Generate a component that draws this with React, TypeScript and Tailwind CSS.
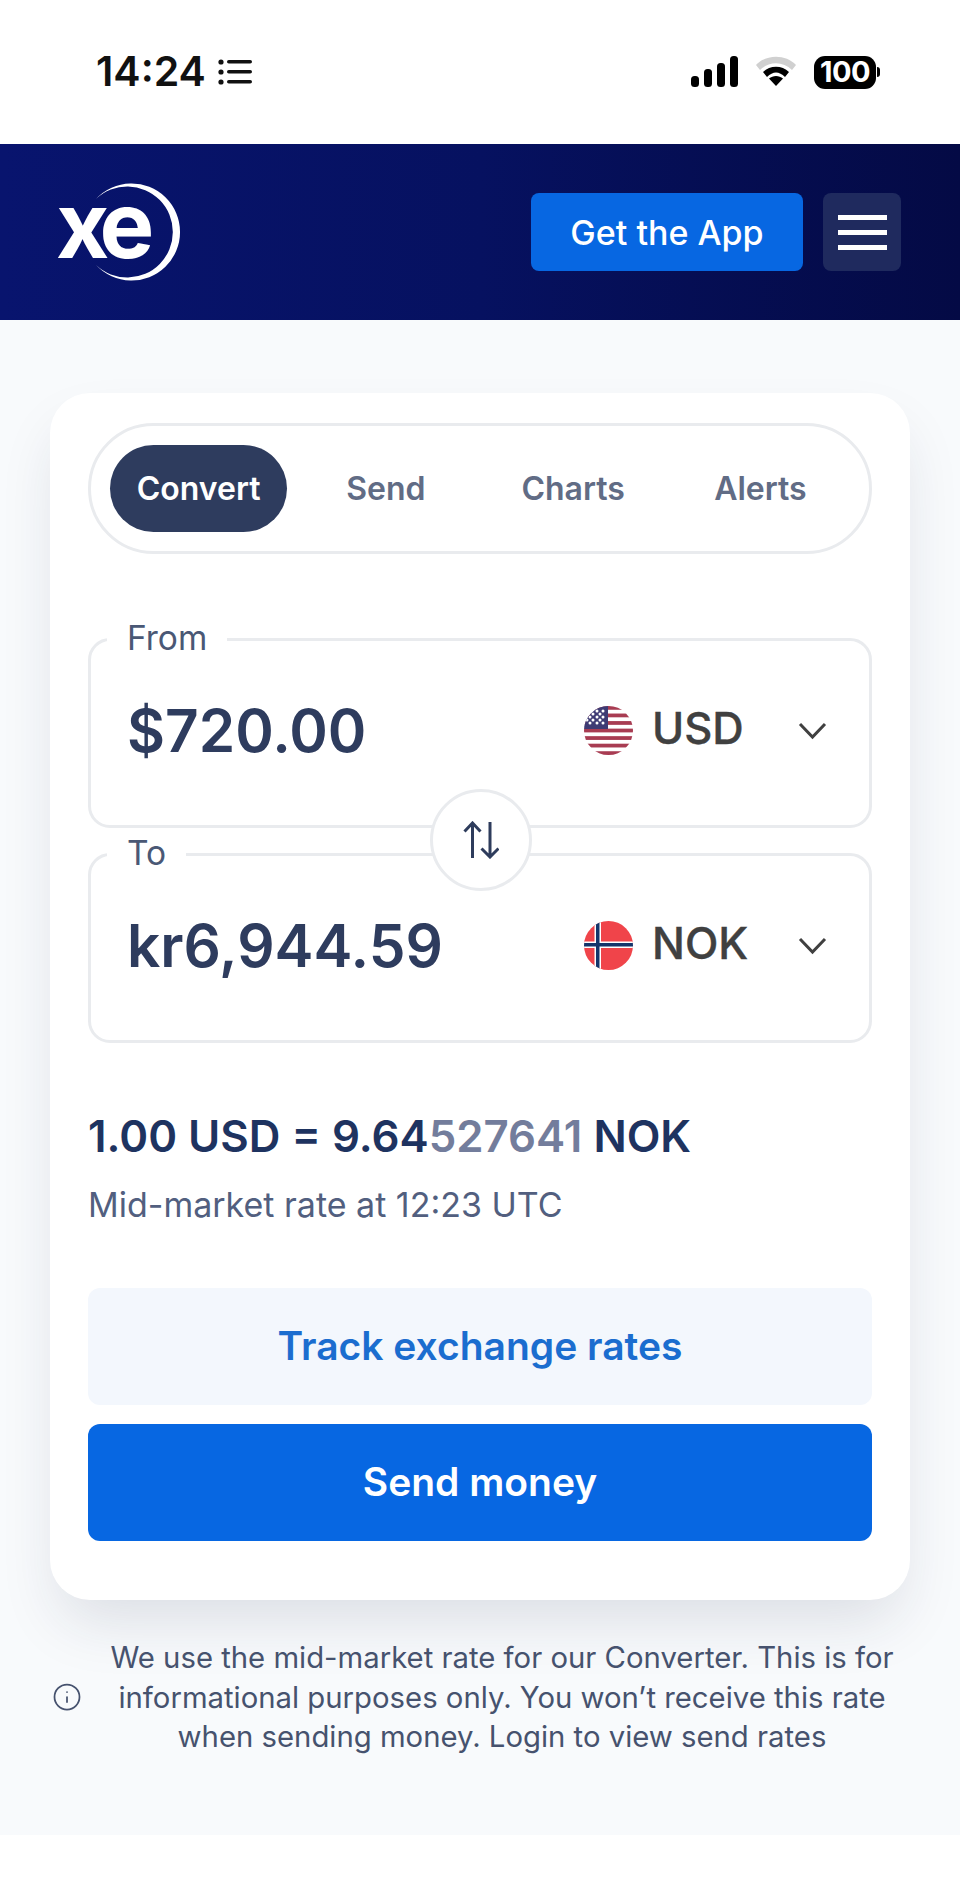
import { Info } from 'lucide-react'

function UsFlag() {
  const stripes = [0, 2, 4, 6, 8, 10, 12]
  const dots = [
    [6, 11], [13, 5], [13, 11], [19, 5], [19, 11],
    [9, 8], [16, 8], [9, 14], [16, 14], [6, 17], [13, 17], [19, 17], [3, 14],
  ]
  return (
    <svg width="49" height="49" viewBox="0 0 49 49" className="shrink-0">
      <defs>
        <clipPath id="us">
          <circle cx="24.5" cy="24.5" r="24.5" />
        </clipPath>
      </defs>
      <g clipPath="url(#us)">
        <rect width="49" height="49" fill="#fff" />
        {stripes.map((i) => (
          <rect key={i} y={i * 3.77} width="49" height="3.77" fill="#a83c52" />
        ))}
        <rect width="24" height="23" fill="#3e3b74" />
        {dots.map(([x, y]) => (
          <circle key={`${x}-${y}`} cx={x} cy={y} r="1.5" fill="#fff" />
        ))}
      </g>
    </svg>
  )
}

function NoFlag() {
  return (
    <svg width="49" height="49" viewBox="0 0 49 49" className="shrink-0">
      <defs>
        <clipPath id="no">
          <circle cx="24.5" cy="24.5" r="24.5" />
        </clipPath>
      </defs>
      <g clipPath="url(#no)">
        <rect width="49" height="49" fill="#f0444a" />
        <rect x="10.500" width="6.500" height="49" fill="#fff" />
        <rect y="20.500" width="49" height="6.500" fill="#fff" />
        <rect x="12" width="3.500" height="49" fill="#14356b" />
        <rect y="22" width="49" height="3.500" fill="#14356b" />
      </g>
    </svg>
  )
}

function Chevron() {
  return (
    <svg width="29" height="18" viewBox="0 0 29 18" fill="none" className="shrink-0">
      <path d="M2 2l12.5 13L27 2" stroke="#404040" strokeWidth="3" />
    </svg>
  )
}

function Logo() {
  return (
    <svg width="122" height="98" viewBox="0 0 122 98" className="shrink-0 overflow-visible">
      <text x="-3" y="75" fill="#fff" fontFamily="Inter, sans-serif" fontWeight="700" fontSize="92" letterSpacing="-8">
        xe
      </text>
      <path d="M37 16A48.5 48.5 0 1 1 37 82A45.5 45.5 0 1 0 37 16Z" fill="#fff" />
    </svg>
  )
}

function SwapIcon() {
  return (
    <svg width="36" height="38" viewBox="0 0 36 38" fill="none" stroke="#2e3c5c" strokeWidth="3">
      <path d="M9.5 37V2M1.5 10.5L9.5 2l8 8.5" />
      <path d="M27 1v35M18.500 27.500L27 36l8.500-8.500" />
    </svg>
  )
}

function ListIcon() {
  return (
    <svg width="34" height="26" viewBox="0 0 34 26" fill="#111">
      <circle cx="3" cy="3" r="2.600" />
      <circle cx="3" cy="13" r="2.600" />
      <circle cx="3" cy="23" r="2.600" />
      <rect x="9" y="1" width="25" height="3.600" rx="1.800" />
      <rect x="9" y="11" width="25" height="3.600" rx="1.800" />
      <rect x="9" y="21" width="25" height="3.600" rx="1.800" />
    </svg>
  )
}

function StatusIcons() {
  return (
    <div className="flex items-center">
      <svg width="48" height="32" viewBox="0 0 48 32" fill="#000">
        <rect x="0" y="20" width="8" height="11" rx="3.500" />
        <rect x="13" y="13" width="8" height="18" rx="3.500" />
        <rect x="26" y="7" width="8" height="24" rx="3.500" />
        <rect x="39" y="0" width="8" height="31" rx="3.500" />
      </svg>
      <svg width="42" height="32" viewBox="0 0 42 32" className="ml-[16px] mb-[2px]">
        <path d="M1 10C11 -1 31 -1 41 10L37 15C28 6 14 6 5 15Z" fill="#d0d0d0" />
        <path d="M8 17C15 10 27 10 34 17L30 22C24 16 18 16 12 22Z" fill="#000" />
        <path d="M14 23.500C18 20 24 20 28 23.500L21 31Z" fill="#000" />
      </svg>
      <div className="ml-[17px] flex items-center">
        <div className="flex h-[33px] w-[62px] items-center justify-center rounded-[11px] bg-black text-[29px] font-bold tracking-[-0.5px] text-white">
          100
        </div>
        <div className="ml-[1px] h-[10px] w-[3px] rounded-r-full bg-black" />
      </div>
    </div>
  )
}

function CurrencyBox({ label, amount, code, flag }: { label: string; amount: string; code: string; flag: React.ReactNode }) {
  return (
    <fieldset className="h-[209px] rounded-[22px] border-[3px] border-[#e9ebee]">
      <legend className="ml-4 px-5 pb-[2px] text-[33.5px] leading-[38px] text-[#4a5875]">{label}</legend>
      <div className="flex h-[143px] items-center justify-between pl-9 pr-[42px]">
        <span className="text-[58.500px] font-semibold text-[#2e3c5e]">{amount}</span>
        <div className="flex items-center">
          {flag}
          <span className="mb-1 ml-[19px] w-[146px] text-[43.5px] font-medium text-[#404040] [-webkit-text-stroke:0.4px_#404040]">{code}</span>
          <Chevron />
        </div>
      </div>
    </fieldset>
  )
}

export default function App() {
  const tabs = ['Convert', 'Send', 'Charts', 'Alerts']

  return (
    <div className="w-[960px] min-h-[1904px] bg-white font-[Inter,sans-serif]">
      {/* Status bar */}
      <div className="flex h-[144px] items-center justify-between pl-[96px] pr-[80px]">
        <div className="flex items-center gap-3">
          <span className="text-[41px] font-semibold text-[#111]">14:24</span>
          <ListIcon />
        </div>
        <StatusIcons />
      </div>

      {/* Header */}
      <header className="flex h-[176px] items-center justify-between bg-gradient-to-r from-[#08146e] via-[#061160] to-[#040a45] pl-[59px] pr-[59px]">
        <Logo />
        <div className="flex items-center gap-5">
          <button className="flex h-[78px] w-[272px] items-center justify-center rounded-lg bg-[#0767e2] text-[34px] font-medium text-white">
            Get the App
          </button>
          <button className="flex h-[78px] w-[78px] flex-col items-center justify-center gap-[10px] rounded-lg bg-[#1f2a5e]">
            <div className="h-[5px] w-[49px] bg-white" />
            <div className="h-[5px] w-[49px] bg-white" />
            <div className="h-[5px] w-[49px] bg-white" />
          </button>
        </div>
      </header>

      <main className="h-[1515px] bg-[#f8fafc] pt-[73px]">
        {/* Converter card */}
        <div className="mx-[50px] h-[1207px] rounded-[40px] bg-white px-[38px] pt-[30px] shadow-[0_30px_60px_-10px_rgba(30,40,70,0.13)]">
          <div className="grid h-[131px] grid-cols-4 items-center gap-[10px] rounded-full border-[3px] border-[#e9ebee] pl-[19px] pr-[20px]">
            {tabs.map((tab, i) => (
              <div
                key={tab}
                className={
                  i === 0
                    ? 'flex h-[87px] items-center justify-center rounded-full bg-[#2e3c5e] text-[32px] font-semibold text-white'
                    : 'flex h-[87px] items-center justify-center rounded-full text-[32px] font-semibold text-[#616c85]'
                }
              >
                {tab}
              </div>
            ))}
          </div>

          <div className="relative mt-[65px] flex flex-col gap-[6px]">
            <CurrencyBox label="From" amount="$720.00" code="USD" flag={<UsFlag />} />
            <CurrencyBox label="To" amount="kr6,944.59" code="NOK" flag={<NoFlag />} />
            <button className="absolute left-[342px] top-[170px] flex h-[102px] w-[102px] items-center justify-center rounded-full border-[3px] border-[#e9ebee] bg-white">
              <SwapIcon />
            </button>
          </div>

          <p className="mt-[68px] text-[43.8px] leading-[52px] font-semibold text-[#1e3360]">
            1.00 USD = 9.64<span className="text-[#737d9c]">527641</span> NOK
          </p>
          <p className="mt-[22px] text-[34px] leading-[40px] text-[#525f7f]">Mid-market rate at 12:23 UTC</p>

          <button className="mt-[63px] flex h-[117px] w-full items-center justify-center rounded-xl bg-[#f3f7fd] text-[39px] font-semibold text-[#1b6dcf]">
            Track exchange rates
          </button>
          <button className="mt-[19px] flex h-[117px] w-full items-center justify-center rounded-xl bg-[#0767e2] text-[39px] font-semibold text-white">
            Send money
          </button>
        </div>

        {/* Disclaimer */}
        <div className="mt-[38px] flex items-center pl-[52px]">
          <Info size={30} strokeWidth={1.4} className="shrink-0 text-[#46526e]" />
          <p className="ml-[22px] w-[796px] text-center text-[29.3px] leading-[39.5px] text-[#46526e]">
            We use the mid-market rate for our Converter. This is for
            <br />
            informational purposes only. You won’t receive this rate
            <br />
            when sending money. Login to view send rates
          </p>
        </div>
      </main>
    </div>
  )
}
